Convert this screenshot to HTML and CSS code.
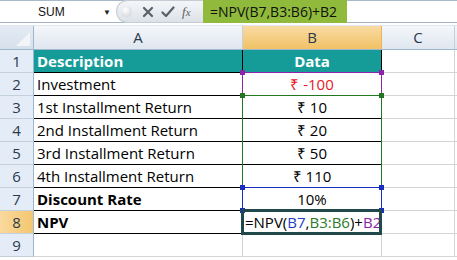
FILE: index.html
```html
<!DOCTYPE html>
<html lang="en">
  <head>
    <meta charset="UTF-8" />
    <title>NPV in Excel</title>
    <link rel="stylesheet" href="styles.css">
  </head>
  <body>
    <div class="formula-bar">
      <div class="name-box">
        <span class="name">SUM</span>
        <span class="drop">&#9660;</span>
      </div>
      <div class="buttons">
        <span class="dot"></span>
        <svg class="icon" width="12" height="12" viewBox="0 0 12 12">
          <path d="M2 2 L10 10 M10 2 L2 10" stroke="#5a5f66" stroke-width="2.2" stroke-linecap="round" />
        </svg>
        <svg class="icon" width="14" height="12" viewBox="0 0 14 12">
          <path d="M1.5 6.5 L5 10 L12.5 1.5" stroke="#5a5f66" stroke-width="2.2" fill="none" stroke-linecap="round" stroke-linejoin="round" />
        </svg>
        <span class="fx"><i>f</i><span>x</span></span>
      </div>
      <div class="formula">=NPV(B7,B3:B6)+B2</div>
    </div>

    <div class="sheet-wrap">
      <div class="sheet">
        <div class="corner"><span class="tri"></span></div>
        <div class="col-head">A</div>
        <div class="col-head active">B</div>
        <div class="col-head">C</div>
        <div class="col-head"></div>

        <div class="row-head">1</div>
        <div class="cell title">Description</div>
        <div class="cell title center">Data</div>
        <div class="cell"></div>
        <div class="cell"></div>

        <div class="row-head">2</div>
        <div class="cell lined">Investment</div>
        <div class="cell lined center red">₹ -100</div>
        <div class="cell"></div>
        <div class="cell"></div>

        <div class="row-head">3</div>
        <div class="cell lined">1st Installment Return</div>
        <div class="cell lined center">₹ 10</div>
        <div class="cell"></div>
        <div class="cell"></div>

        <div class="row-head">4</div>
        <div class="cell lined">2nd Installment Return</div>
        <div class="cell lined center">₹ 20</div>
        <div class="cell"></div>
        <div class="cell"></div>

        <div class="row-head">5</div>
        <div class="cell lined">3rd Installment Return</div>
        <div class="cell lined center">₹ 50</div>
        <div class="cell"></div>
        <div class="cell"></div>

        <div class="row-head">6</div>
        <div class="cell lined">4th Installment Return</div>
        <div class="cell lined center">₹ 110</div>
        <div class="cell"></div>
        <div class="cell"></div>

        <div class="row-head">7</div>
        <div class="cell lined bold">Discount Rate</div>
        <div class="cell lined center">10%</div>
        <div class="cell"></div>
        <div class="cell"></div>

        <div class="row-head active">8</div>
        <div class="cell lined bold">NPV</div>
        <div class="cell lined edit">=NPV(<span class="c-blue">B7</span>,<span class="c-green">B3:B6</span>)+<span class="c-purple">B2</span></div>
        <div class="cell"></div>
        <div class="cell"></div>

        <div class="row-head">9</div>
        <div class="cell"></div>
        <div class="cell"></div>
        <div class="cell"></div>
        <div class="cell"></div>
      </div>

      <div class="sheet overlay">
        <div class="range range-purple"><i class="h tl"></i><i class="h tr"></i><i class="h bl"></i><i class="h br"></i></div>
        <div class="range range-green"><i class="h tl"></i><i class="h tr"></i><i class="h bl"></i><i class="h br"></i></div>
        <div class="range range-blue"><i class="h tl"></i><i class="h tr"></i><i class="h bl"></i><i class="h br"></i></div>
        <div class="range range-active"></div>
      </div>
    </div>
  </body>
</html>
```

FILE: styles.css
```css
body {
  margin: 0;
  font-family: 'Open Sans', sans-serif;
  background-color: #fff;
  color: #000;
  overflow: hidden;
}

.formula-bar {
  display: flex;
  align-items: stretch;
  height: 21px;
  border-top: 1px solid #a9b9cc;
  border-bottom: 1px solid #a5b5c8;
  background-color: #fff;
}

.name-box {
  width: 116px;
  display: flex;
  align-items: center;
}

.name {
  font-family: 'Liberation Sans', sans-serif;
  font-size: 12px;
  margin-left: 38px;
  color: #111;
}

.drop {
  font-size: 8px;
  margin-left: auto;
  margin-right: 5px;
  color: #222;
}

.buttons {
  width: 82px;
  display: flex;
  align-items: center;
  gap: 7px;
  padding-left: 4px;
  border-radius: 12px 0 0 12px;
  background: linear-gradient(#f4f6f9, #dde2e8);
  border: 1px solid #c6ccd4;
  border-right: none;
  margin-top: -1px;
  margin-bottom: -1px;
}

.dot {
  width: 11px;
  height: 11px;
  border-radius: 50%;
  background: radial-gradient(circle at 40% 35%, #fff, #c8cdd3);
  margin-right: 3px;
}

.fx {
  font-family: 'Liberation Serif', serif;
  font-size: 13px;
  color: #5a5f66;
}

.fx span {
  font-size: 11px;
  font-style: italic;
}

.formula {
  width: 137px;
  background-color: #8fba3b;
  font-size: 14px;
  line-height: 21px;
  padding-left: 7px;
  margin-top: -1px;
  margin-bottom: -1px;
  padding-top: 1px;
  color: #111;
}

.sheet-wrap {
  position: relative;
  margin-top: 2px;
  border-top: 1px solid #dfe6ee;
}

.sheet {
  display: grid;
  grid-template-columns: 34px 209px 139px 73px 1fr;
  grid-template-rows: 24px repeat(9, 23px);
  font-size: 15px;
}

.sheet > div {
  box-sizing: border-box;
}

.overlay {
  position: absolute;
  inset: 0;
  pointer-events: none;
}

.corner {
  background: linear-gradient(#e4ebf4, #d6e0ec);
  border-right: 1px solid #9eb6ce;
  border-bottom: 1px solid #9eb6ce;
  position: relative;
}

.tri {
  position: absolute;
  right: 3px;
  bottom: 3px;
  width: 0;
  height: 0;
  border-left: 14px solid transparent;
  border-bottom: 14px solid #f2f4f7;
}

.col-head {
  background: linear-gradient(#f4f7fb, #dfe6ef);
  border-right: 1px solid #c5d0dd;
  border-bottom: 1px solid #9eb6ce;
  text-align: center;
  line-height: 23px;
  color: #2b3a4c;
}

.col-head.active {
  background: linear-gradient(#f9dba3, #f1c266);
  border-right-color: #f0b44c;
}

.row-head {
  background-color: #e4ecf7;
  border-right: 1px solid #9eb6ce;
  border-bottom: 1px solid #c5d0dd;
  text-align: center;
  line-height: 22px;
  color: #2b3a4c;
}

.row-head.active {
  background: linear-gradient(90deg, #f9d99d, #f3c770);
}

.cell {
  border-right: 1px solid #d4d4d4;
  border-bottom: 1px solid #d4d4d4;
  line-height: 22px;
  padding-left: 3px;
  white-space: nowrap;
}

.title {
  background-color: #159c99;
  color: #fff;
  font-weight: bold;
  border-right-color: #000;
  border-bottom-color: #000;
}

.lined {
  border-bottom-color: #000;
}

.center {
  text-align: center;
  padding-left: 0;
}

.bold {
  font-weight: bold;
}

.red {
  color: #e3201d;
}

.edit {
  padding-left: 2px;
}

.c-blue {
  color: #1e3ec4;
}

.c-green {
  color: #2b7a2b;
}

.c-purple {
  color: #8c1fa6;
}

.range {
  grid-column: 3;
  margin: -1px 0 0 -1px;
  position: relative;
}

.range-purple {
  grid-row: 3;
  border: 1px solid #8e24aa;
  color: #8e24aa;
}

.range-green {
  grid-row: 4 / 8;
  border: 1px solid #217821;
  color: #217821;
}

.range-blue {
  grid-row: 8;
  border: 1px solid #1a2fc0;
  color: #1a2fc0;
}

.range-active {
  grid-row: 9;
  margin: -2px 0 -1px -2px;
  border: 3px solid #21484a;
}

.h {
  position: absolute;
  width: 5px;
  height: 5px;
  background-color: currentColor;
}

.tl { left: -3px; top: -3px; }
.tr { right: -3px; top: -3px; }
.bl { left: -3px; bottom: -3px; }
.br { right: -3px; bottom: -3px; }
```
